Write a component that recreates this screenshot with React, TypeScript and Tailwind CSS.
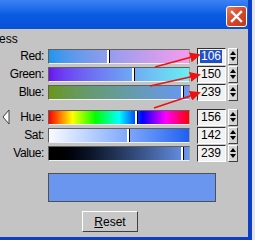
import React from 'react';

type Row = { label: string; value: number; bg: string; selected?: boolean; arrow?: boolean };

const rgbRows: Row[] = [
  { label: 'Red:', value: 106, bg: 'bg-linear-to-r from-[#1896ec] to-[#f49cec]', selected: true },
  { label: 'Green:', value: 150, bg: 'bg-linear-to-r from-[#6a10ef] to-[#6af0ef]' },
  { label: 'Blue:', value: 239, bg: 'bg-linear-to-r from-[#6a9610] to-[#6a96f8]' },
];

const hsvRows: Row[] = [
  { label: 'Hue:', value: 156, bg: 'bg-[linear-gradient(to_right,#f00,#ff0,#0f0,#0ff,#00f,#f0f,#f00)]', arrow: true },
  { label: 'Sat:', value: 142, bg: 'bg-linear-to-r from-[#fafaff] to-[#1f5fef]' },
  { label: 'Value:', value: 239, bg: 'bg-linear-to-r from-[#000000] to-[#6a96ef]' },
];

const BAR_W = 142;

function Spinner() {
  return (
    <div className="ml-[2px] w-[10px] h-[17px] bg-[#d4d4d4] border border-t-white border-l-white border-b-[#404040] border-r-[#404040] flex flex-col items-center justify-center gap-[2px]">
      <svg width="6" height="4" viewBox="0 0 6 4"><polygon points="3,0 6,4 0,4" fill="#000" /></svg>
      <svg width="6" height="4" viewBox="0 0 6 4"><polygon points="0,0 6,0 3,4" fill="#000" /></svg>
    </div>
  );
}

function SliderRow({ row }: { row: Row }) {
  const left = Math.round((row.value / 255) * BAR_W) - 1;
  return (
    <div className="flex items-center h-[18px]">
      <div className="w-[44px] flex items-center justify-between">
        {row.arrow ? (
          <svg width="8" height="16" viewBox="0 0 8 16" className="ml-[2px]">
            <polygon points="7,1 1,8 7,15" fill="#ffffff" stroke="#404040" strokeWidth="1" />
          </svg>
        ) : (
          <span />
        )}
        <span className="tracking-[-0.4px]">{row.label}</span>
      </div>
      <div className={`relative ml-[4px] w-[142px] h-[15px] border border-t-[#606060] border-l-[#606060] border-b-[#f0f0f0] border-r-[#a0a0a0] ${row.bg}`}>
        <div className="absolute top-0 bottom-0 w-[3px] flex" style={{ left }}>
          <div className="w-[2px] bg-white" />
          <div className="w-[1px] bg-black" />
        </div>
      </div>
      <div className="ml-[7px] w-[29px] h-[17px] bg-[#f2f2f2] border border-t-[#303030] border-l-[#303030] border-b-white border-r-white flex items-center pl-[2px] text-[12px]">
        <span className={row.selected ? 'bg-[#2050c8] text-white leading-[13px] px-[1px]' : 'px-[1px]'}>{row.value}</span>
      </div>
      <Spinner />
    </div>
  );
}

export default function App() {
  return (
    <div className="w-[255px] h-[240px] overflow-hidden bg-[#e4e4e4] relative" style={{ fontFamily: '"Liberation Sans", Arial, sans-serif' }}>
      <div className="w-[252px] h-[240px] flex flex-col border-r-[4px] border-b-[3px] border-[#0b3ec9] text-[12px] text-black">
        {/* title bar */}
        <div className="h-[29px] bg-linear-to-b from-[#3b82f4] via-[#0a5ce3] to-[#0750d4] flex items-start justify-end pr-[1px] pt-[6px]">
          <div className="w-[21px] h-[21px] rounded-[3px] border border-white bg-linear-to-br from-[#e8795a] via-[#d4482a] to-[#c03818] flex items-center justify-center">
            <svg width="13" height="13" viewBox="0 0 13 13">
              <path d="M2 2 L11 11 M11 2 L2 11" stroke="#fff" strokeWidth="2.4" strokeLinecap="square" />
            </svg>
          </div>
        </div>
        {/* body */}
        <div className="flex-1 bg-[#c4c4c4] flex flex-col">
          <div className="mt-[3px] -ml-[1px] h-[14px] leading-[14px]">ess</div>
          <div className="mt-[1px] flex flex-col">
            {rgbRows.map((r) => <SliderRow key={r.label} row={r} />)}
          </div>
          <div className="mt-[7px] flex flex-col">
            {hsvRows.map((r) => <SliderRow key={r.label} row={r} />)}
          </div>
          <div className="mt-[11px] ml-[48px] w-[168px] h-[29px] bg-[#6a96ef] border border-[#505050]" />
          <div className="mt-[9px] ml-[82px] w-[56px] h-[21px] bg-[#c8c8c8] border border-t-white border-l-white border-b-[#404040] border-r-[#404040] flex items-center justify-center">
            <span><span className="underline">R</span>eset</span>
          </div>
        </div>
      </div>
      {/* red annotation arrows */}
      <svg className="absolute left-0 top-0 pointer-events-none" width="255" height="240" viewBox="0 0 255 240">
        <defs>
          <marker id="ah" markerWidth="11" markerHeight="10" refX="9" refY="5" orient="auto" markerUnits="userSpaceOnUse">
            <polygon points="0,0 11,5 0,10" fill="#ee1111" />
          </marker>
        </defs>
        <line x1="155" y1="67" x2="199" y2="55" stroke="#ee1111" strokeWidth="1.6" markerEnd="url(#ah)" />
        <line x1="150" y1="86" x2="199" y2="75" stroke="#ee1111" strokeWidth="1.6" markerEnd="url(#ah)" />
        <line x1="154" y1="108" x2="199" y2="93" stroke="#ee1111" strokeWidth="1.6" markerEnd="url(#ah)" />
      </svg>
    </div>
  );
}
